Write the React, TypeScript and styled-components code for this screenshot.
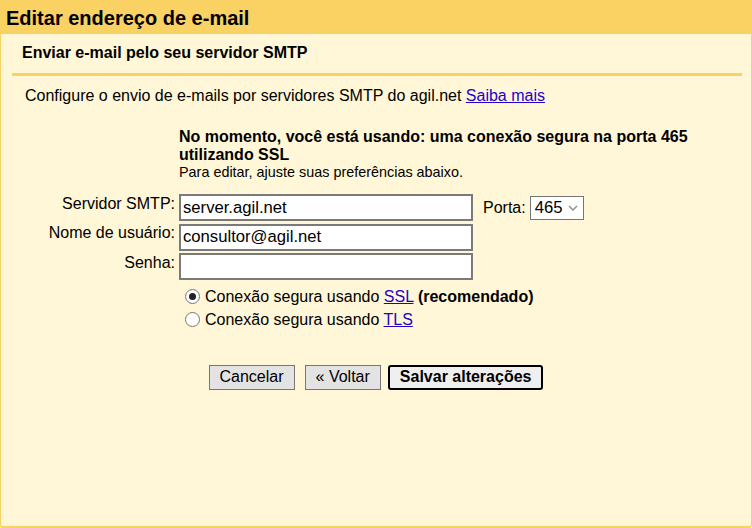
import React from "react";
import styled, { createGlobalStyle } from "styled-components";

const Global = createGlobalStyle`
  html, body, #root { margin: 0; padding: 0; height: 100%; }
  body {
    font-family: "Liberation Sans", Arial, sans-serif;
    color: #000;
    background: #fff7d7;
  }
  * { box-sizing: border-box; }
`;

const Panel = styled.div`
  height: 528px;
  display: flex;
  flex-direction: column;
  background: #fff7d7;
  border-left: 1px solid #fad163;
  border-right: 1px solid #fad163;
  border-bottom: 2px solid #fad163;
  border-radius: 0 0 3px 3px;
`;

const Header = styled.div`
  height: 34px;
  padding: 7px 5px 0;
  background: #fad163;
`;

const Title = styled.h1`
  margin: 0;
  font-size: 20px;
  line-height: 23px;
  font-weight: bold;
`;

const Content = styled.div`
  padding: 0 9px 0 11px;
`;

const SubTitle = styled.h2`
  margin: 10px 0 11px;
  padding-left: 10px;
  font-size: 16px;
  line-height: 18px;
  font-weight: bold;
`;

const Rule = styled.div`
  height: 3px;
  background: #fad163;
`;

const Intro = styled.p`
  margin: 11px 0 0;
  padding-left: 13px;
  font-size: 16px;
  line-height: 18px;
`;

const Link = styled.a`
  color: #2200cc;
  text-decoration: underline;
  cursor: pointer;
`;

const Form = styled.div`
  display: grid;
  grid-template-columns: 163px auto;
  column-gap: 4px;
  row-gap: 2.5px;
  margin-top: 23px;
  font-size: 16px;
`;

const Notice = styled.div`
  grid-column: 2;
  margin-bottom: 10.5px;
`;

const NoticeStrong = styled.div`
  font-weight: bold;
  font-size: 16px;
  line-height: 18px;
`;

const NoticeHint = styled.div`
  margin-top: 0;
  font-size: 14.4px;
  line-height: 17px;
`;

const Label = styled.label`
  grid-column: 1;
  align-self: start;
  padding-top: 0.5px;
  text-align: right;
  font-size: 16px;
  line-height: 18px;
`;

const Field = styled.div`
  grid-column: 2;
  display: flex;
  align-items: center;
`;

const TextInput = styled.input`
  width: 294px;
  height: 27px;
  padding: 1px 2px;
  border: 2px solid #7a7a7a;
  background: #fff;
  font-family: "Liberation Sans", Arial, sans-serif;
  font-size: 16.67px;
  color: #000;
  outline: none;
`;

const PortLabel = styled.span`
  margin: 0 4px 0 10px;
  font-size: 16px;
  line-height: 18px;
`;

const SelectWrap = styled.div`
  position: relative;
  width: 54px;
  height: 24px;
`;

const Select = styled.select`
  appearance: none;
  width: 54px;
  height: 24px;
  padding: 0 0 0 4px;
  border: 1px solid #767676;
  border-radius: 0;
  background: #fff;
  font-family: "Liberation Sans", Arial, sans-serif;
  font-size: 16.67px;
  color: #000;
`;

const Chevron = styled.svg`
  position: absolute;
  right: 6px;
  top: 9px;
  pointer-events: none;
`;

const Radios = styled.div`
  grid-column: 2;
  margin-top: 5px;
  display: flex;
  flex-direction: column;
  gap: 5.5px;
`;

const RadioRow = styled.label`
  display: flex;
  align-items: flex-start;
  font-size: 16px;
  line-height: 18px;
`;

const Radio = styled.input`
  appearance: none;
  width: 15px;
  height: 15px;
  margin: 1px 5px 0 6px;
  border: 1px solid #767676;
  border-radius: 50%;
  background: #fff;
  position: relative;
  flex: none;
  &:checked::after {
    content: "";
    position: absolute;
    left: 3px;
    top: 3px;
    width: 7px;
    height: 7px;
    border-radius: 50%;
    background: #222;
  }
`;

const Buttons = styled.div`
  display: flex;
  justify-content: center;
  margin-top: 35.5px;
`;

const Button = styled.button<{ $primary?: boolean; $gap?: number }>`
  height: 25px;
  padding: 0 10px;
  margin-right: ${(p) => p.$gap ?? 0}px;
  font-family: "Liberation Sans", Arial, sans-serif;
  font-size: 16px;
  color: #000;
  font-weight: ${(p) => (p.$primary ? "bold" : "normal")};
  background: ${(p) => (p.$primary ? "#efefef" : "#e3e3e3")};
  border: ${(p) => (p.$primary ? "2px solid #000" : "1px solid #767676")};
  border-radius: ${(p) => (p.$primary ? "3px" : "0")};
  cursor: pointer;
`;

export default function App() {
  return (
    <>
      <Global />
      <Panel>
        <Header>
          <Title>Editar endereço de e-mail</Title>
        </Header>
        <Content>
          <SubTitle>Enviar e-mail pelo seu servidor SMTP</SubTitle>
          <Rule />
          <Intro>
            Configure o envio de e-mails por servidores SMTP do agil.net <Link>Saiba mais</Link>
          </Intro>
          <Form>
            <Notice>
              <NoticeStrong>
                No momento, você está usando: uma conexão segura na porta 465
                <br />
                utilizando SSL
              </NoticeStrong>
              <NoticeHint>Para editar, ajuste suas preferências abaixo.</NoticeHint>
            </Notice>

            <Label>Servidor SMTP:</Label>
            <Field>
              <TextInput defaultValue="server.agil.net" />
              <PortLabel>Porta:</PortLabel>
              <SelectWrap>
                <Select defaultValue="465">
                  <option value="465">465</option>
                  <option value="587">587</option>
                  <option value="25">25</option>
                </Select>
                <Chevron width="10" height="6" viewBox="0 0 10 6">
                  <path d="M1 1l4 4 4-4" fill="none" stroke="#8a8a8a" strokeWidth="1.3" />
                </Chevron>
              </SelectWrap>
            </Field>

            <Label>Nome de usuário:</Label>
            <Field>
              <TextInput defaultValue="consultor@agil.net" />
            </Field>

            <Label>Senha:</Label>
            <Field>
              <TextInput type="password" />
            </Field>

            <Radios>
              <RadioRow>
                <Radio type="radio" name="sec" defaultChecked />
                <span>
                  Conexão segura usando <Link>SSL</Link> <b>(recomendado)</b>
                </span>
              </RadioRow>
              <RadioRow>
                <Radio type="radio" name="sec" />
                <span>
                  Conexão segura usando <Link>TLS</Link>
                </span>
              </RadioRow>
            </Radios>
          </Form>
        </Content>
        <Buttons>
          <Button $gap={10}>Cancelar</Button>
          <Button $gap={7}>« Voltar</Button>
          <Button $primary>Salvar alterações</Button>
        </Buttons>
      </Panel>
    </>
  );
}
